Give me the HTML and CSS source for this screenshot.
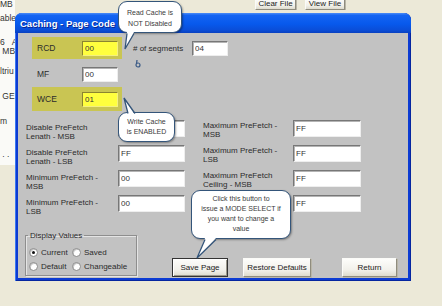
FILE: index.html
```html
<!DOCTYPE html>
<html lang="en">
<head>
    <meta charset="UTF-8">
    <meta name="viewport" content="width=device-width, initial-scale=1.0">
    <title>Caching - Page Code</title>
    <link rel="stylesheet" href="styles.css">
</head>
<body>
    <!-- the window behind the dialog -->
    <div class="desk">
        <div class="desk-left">
            <div class="frag f1">MB</div>
            <div class="frag f2">ables</div>
            <div class="frag f3">6&nbsp;&nbsp;&nbsp;A</div>
            <div class="frag f4">&nbsp;MB</div>
            <div class="frag f5">ltriu</div>
            <div class="frag f6">&nbsp;GE:</div>
            <div class="frag f7">m</div>
            <div class="frag f8">&nbsp;.&nbsp;.</div>
        </div>
        <div class="desk-top">
            <button class="btn clear">Clear File</button>
            <button class="btn view">View File</button>
        </div>
    </div>

    <div class="dialog">
        <div class="titlebar">Caching - Page Code</div>
        <div class="dlg-body">
            <div class="top-rows">
                <div class="row">
                    <div class="hl">
                        <span class="lbl">RCD</span>
                        <input class="fld top yellow" value="00" readonly>
                    </div>
                    <span class="seg-lbl"># of segments</span>
                    <input class="fld top" value="04" readonly>
                </div>
                <div class="hl plain">
                    <span class="lbl">MF</span>
                    <input class="fld top" value="00" readonly>
                </div>
                <div class="hl wce">
                    <span class="lbl">WCE</span>
                    <input class="fld top yellow" value="01" readonly>
                </div>
            </div>

            <div class="grid">
                <div class="glbl">Disable PreFetch<br>Lenath - MSB</div>
                <input class="fld" value="" readonly>
                <div></div>
                <div class="glbl r">Maximum PreFetch -<br>MSB</div>
                <input class="fld" value="FF" readonly>

                <div class="glbl">Disable PreFetch<br>Lenath - LSB</div>
                <input class="fld" value="FF" readonly>
                <div></div>
                <div class="glbl r">Maximum PreFetch -<br>LSB</div>
                <input class="fld" value="FF" readonly>

                <div class="glbl">Minimum PreFetch -<br>MSB</div>
                <input class="fld" value="00" readonly>
                <div></div>
                <div class="glbl r">Maximum PreFetch<br>Ceiling - MSB</div>
                <input class="fld" value="FF" readonly>

                <div class="glbl">Minimum PreFetch -<br>LSB</div>
                <input class="fld" value="00" readonly>
                <div></div>
                <div class="glbl r"></div>
                <input class="fld" value="FF" readonly>
            </div>

            <div class="bottom">
                <fieldset class="group">
                    <legend>Display Values</legend>
                    <div class="radios">
                        <label class="opt"><span class="radio on"></span>Current</label>
                        <label class="opt"><span class="radio"></span>Saved</label>
                        <label class="opt"><span class="radio"></span>Default</label>
                        <label class="opt"><span class="radio"></span>Changeable</label>
                    </div>
                </fieldset>
                <div class="actions">
                    <button class="btn save">Save Page</button>
                    <button class="btn restore">Restore Defaults</button>
                    <button class="btn ret">Return</button>
                </div>
            </div>
        </div>
    </div>

    <!-- annotation callouts over the dialog -->
    <div class="callout read">
        Read Cache is<br>NOT Disabled
        <svg class="tail" width="20" height="20" viewBox="0 0 20 20">
            <polygon points="8,1 15,1 6,18" fill="#fff"/>
            <path d="M8 2.5 L6 18 L15 2.5" fill="none" stroke="#34557a" stroke-width="1.3"/>
        </svg>
    </div>
    <svg class="blip" width="8" height="9" viewBox="0 0 8 9">
        <path d="M3 1 L2.5 5" stroke="#3a5a86" stroke-width="1.2" fill="none"/>
        <circle cx="4" cy="6" r="2" stroke="#3a5a86" stroke-width="1.2" fill="none"/>
    </svg>
    <div class="callout write">
        Write Cache<br>is ENABLED
        <svg class="tail" width="20" height="20" viewBox="0 0 20 20">
            <polygon points="5,2 9,19 16,19" fill="#fff"/>
            <path d="M9 17.5 L5 2 L16 17.5" fill="none" stroke="#34557a" stroke-width="1.3"/>
        </svg>
    </div>
    <div class="callout click">
        Click this button to<br>issue a MODE SELECT if<br>you want to change a<br>value
        <svg class="tail" width="30" height="24" viewBox="0 0 30 24">
            <polygon points="13,2 24,2 5,22" fill="#fff"/>
            <path d="M13 3.5 L5 22 L24 3.5" fill="none" stroke="#34557a" stroke-width="1.3"/>
        </svg>
    </div>
</body>
</html>
```

FILE: styles.css
```css
body {
    margin: 0;
    width: 442px;
    height: 306px;
    overflow: hidden;
    position: relative;
    background-color: #ece9d8;
    font-family: "Liberation Sans", Arial, sans-serif;
    color: #2b2b2b;
}

/* background window */
.desk {
    display: flex;
    align-items: flex-start;
}
.desk-left {
    width: 15px;
    height: 165px;
    background-color: #fafaf7;
    font-size: 8.5px;
    line-height: 9px;
    white-space: nowrap;
    color: #333;
}
.f2 { margin-top: 5px; }
.f3 { margin-top: 15px; }
.f5 { margin-top: 11px; }
.f6 { margin-top: 16px; }
.f7 { margin-top: 16px; }
.f8 { margin-top: 24px; }
.desk-top {
    flex: 1;
    display: flex;
    align-items: flex-end;
    gap: 9px;
    height: 10px;
    padding-left: 240px;
    overflow: hidden;
}
.desk-top .btn {
    height: 12px;
    line-height: 10px;
    flex-shrink: 0;
}
.clear { width: 41px; }
.view { width: 40px; }

.btn {
    font-family: inherit;
    font-size: 8px;
    color: #222;
    padding: 0;
    height: 19px;
    background: linear-gradient(#fdfdfb, #f1f0ea 65%, #dedbcd);
    border: 1px solid;
    border-color: #fbfbf8 #8f8c7e #8f8c7e #fbfbf8;
    box-shadow: 1px 1px 0 #b9b6a8;
}

/* dialog window */
.dialog {
    position: absolute;
    left: 15px;
    top: 13px;
    width: 396px;
    height: 268px;
    box-sizing: border-box;
    padding: 0 3px 3px;
    background-color: #0c3bd2;
    border-radius: 7px 7px 0 0;
    display: flex;
    flex-direction: column;
    box-shadow: inset 1px 0 #3a78f0, inset -1px 0 #0626a0, inset 0 -1px #0626a0;
}
.titlebar {
    height: 20px;
    margin: 0 -3px;
    padding-left: 5px;
    line-height: 21px;
    font-size: 9.5px;
    font-weight: bold;
    color: #fff;
    text-shadow: 1px 1px #0a2590;
    border-radius: 7px 7px 0 0;
    background: linear-gradient(#4b8cf7 0, #1464f2 12%, #0759ec 55%, #0a4ed8 85%, #0840c0 100%);
}
.dlg-body {
    flex: 1;
    background-color: #c2c2c2;
}

.top-rows {
    padding: 4px 0 0 14px;
}
.row {
    display: flex;
    align-items: center;
}
.hl {
    width: 90px;
    height: 22px;
    box-sizing: border-box;
    padding-left: 5px;
    display: flex;
    align-items: center;
    background-color: #c9c553;
}
.hl.plain {
    background: none;
    margin-top: 4px;
}
.hl.wce {
    height: 24px;
    margin-top: 2px;
}
.lbl {
    width: 45px;
    font-size: 8.5px;
}
.seg-lbl {
    margin-left: 11px;
    width: 59px;
    font-size: 8px;
}

.fld {
    box-sizing: border-box;
    height: 17px;
    width: 100%;
    margin: 0;
    padding: 0 2px;
    font-family: inherit;
    font-size: 8px;
    color: #333;
    background-color: #fff;
    border: 1px solid;
    border-color: #777 #eee #eee #777;
    box-shadow: inset 1px 1px #b4b4b4;
    outline: none;
}
.fld.top {
    width: 36px;
    height: 15px;
}
.fld.yellow {
    background-color: #ffff3e;
    border-color: #8b8530 #f4f080 #f4f080 #8b8530;
    box-shadow: none;
}

.grid {
    display: grid;
    grid-template-columns: 92px 67px 18px 90px 68px;
    grid-auto-rows: 25px;
    margin-top: 9px;
    padding-left: 8px;
}
.glbl {
    font-size: 8px;
    line-height: 9px;
    padding-top: 3px;
}
.glbl.r {
    padding-top: 1px;
}

.bottom {
    display: flex;
    margin-top: 11px;
    height: 46px;
}
.group {
    margin: 0 0 0 7px;
    width: 112px;
    height: 45px;
    box-sizing: border-box;
    padding: 0 0 0 2px;
    border: 1px solid #8e8e8e;
    box-shadow: 1px 1px 0 #e4e4e4, inset 1px 1px 0 #e4e4e4;
}
.group legend {
    font-size: 8px;
    line-height: 9px;
    padding: 0 2px;
}
.radios {
    display: grid;
    grid-template-columns: 43px 1fr;
    grid-auto-rows: 14px;
    margin-top: 5px;
    font-size: 8px;
}
.opt {
    display: flex;
    align-items: center;
    gap: 3px;
    padding-left: 1px;
}
.radio {
    width: 9px;
    height: 9px;
    box-sizing: border-box;
    border-radius: 50%;
    background-color: #fff;
    border: 1px solid #8a8a8a;
    box-shadow: inset 1px 1px #c8c8c8;
    display: flex;
    align-items: center;
    justify-content: center;
}
.radio.on::after {
    content: "";
    width: 3px;
    height: 3px;
    border-radius: 50%;
    background-color: #111;
}

.actions {
    display: flex;
    align-self: flex-end;
    margin-left: 35px;
}
.save {
    width: 56px;
    border-color: #333;
    box-shadow: inset 1px 1px #fff, inset -1px -1px #9a978a;
}
.restore {
    width: 68px;
    margin-left: 15px;
}
.ret {
    width: 55px;
    margin-left: 31px;
}

/* callouts */
.callout {
    position: absolute;
    box-sizing: border-box;
    background-color: #fff;
    border: 1.5px solid #34557a;
    border-radius: 9px;
    box-shadow: 1px 1px 2px rgba(0, 0, 0, 0.35);
    font-size: 7px;
    color: #3a3a3a;
    text-align: center;
}
.callout .tail {
    position: absolute;
    left: 0;
}
.read {
    left: 118px;
    top: 1px;
    width: 64px;
    height: 32px;
    line-height: 11px;
    padding-top: 5px;
}
.read .tail { top: 29px; }
.write {
    left: 118px;
    top: 112px;
    width: 57px;
    height: 30px;
    line-height: 10px;
    padding-top: 4px;
}
.write .tail { top: -17px; }
.click {
    left: 191px;
    top: 190px;
    width: 100px;
    height: 49px;
    line-height: 10px;
    padding-top: 3px;
}
.click .tail { top: 45px; }
.blip {
    position: absolute;
    left: 134px;
    top: 59px;
}
```
